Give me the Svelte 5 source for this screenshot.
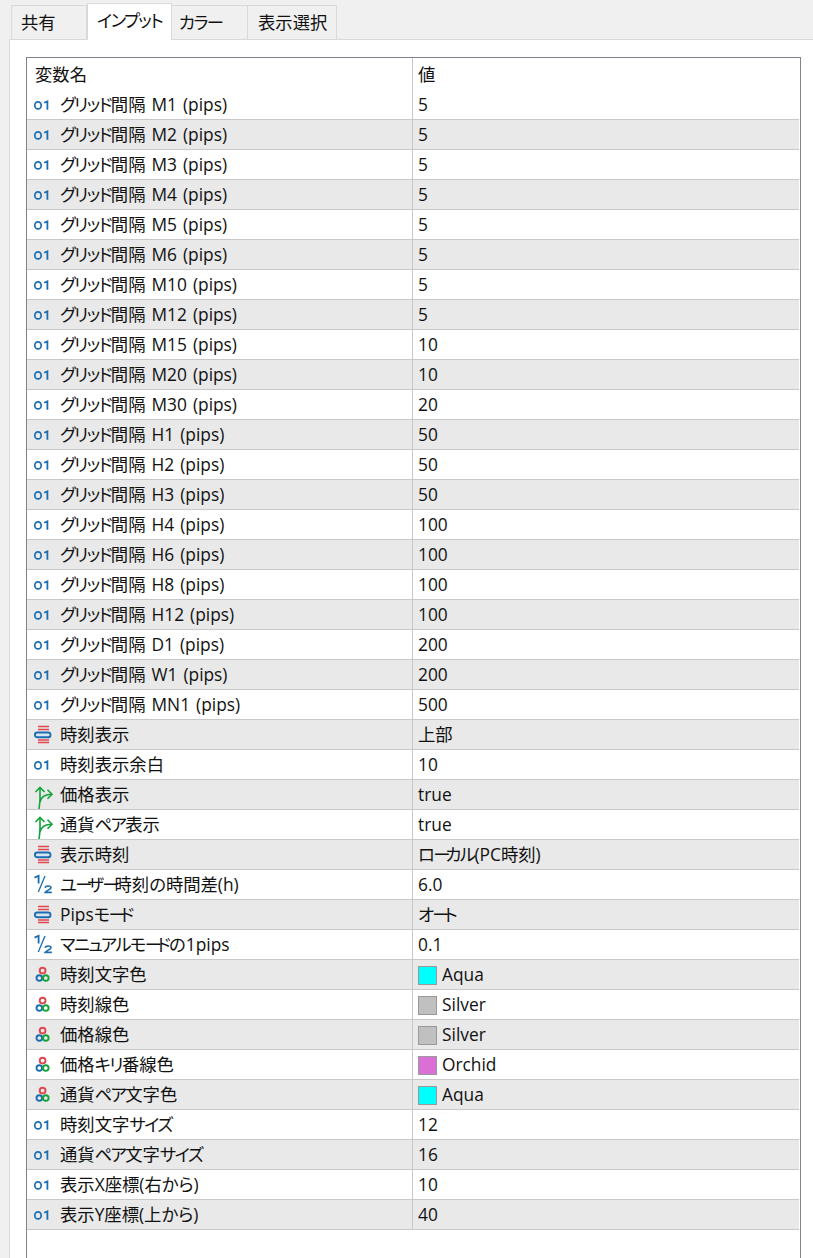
<script>
	const tabs = ['共有', 'インプット', 'カラー', '表示選択'];
	const active = 'インプット';

	const grid = [
		['M1', 5], ['M2', 5], ['M3', 5], ['M4', 5], ['M5', 5], ['M6', 5], ['M10', 5], ['M12', 5],
		['M15', 10], ['M20', 10], ['M30', 20], ['H1', 50], ['H2', 50], ['H3', 50], ['H4', 100],
		['H6', 100], ['H8', 100], ['H12', 100], ['D1', 200], ['W1', 200], ['MN1', 500]
	];

	const rows = [
		...grid.map(([tf, v]) => ({ icon: 'int', name: `グリッド間隔 ${tf} (pips)`, value: String(v) })),
		{ icon: 'enum', name: '時刻表示', value: '上部' },
		{ icon: 'int', name: '時刻表示余白', value: '10' },
		{ icon: 'bool', name: '価格表示', value: 'true' },
		{ icon: 'bool', name: '通貨ペア表示', value: 'true' },
		{ icon: 'enum', name: '表示時刻', value: 'ローカル(PC時刻)' },
		{ icon: 'float', name: 'ユーザー時刻の時間差(h)', value: '6.0' },
		{ icon: 'enum', name: 'Pipsモード', value: 'オート' },
		{ icon: 'float', name: 'マニュアルモードの1pips', value: '0.1' },
		{ icon: 'color', name: '時刻文字色', value: 'Aqua', swatch: '#00ffff' },
		{ icon: 'color', name: '時刻線色', value: 'Silver', swatch: '#c0c0c0' },
		{ icon: 'color', name: '価格線色', value: 'Silver', swatch: '#c0c0c0' },
		{ icon: 'color', name: '価格キリ番線色', value: 'Orchid', swatch: '#da70d6' },
		{ icon: 'color', name: '通貨ペア文字色', value: 'Aqua', swatch: '#00ffff' },
		{ icon: 'int', name: '時刻文字サイズ', value: '12' },
		{ icon: 'int', name: '通貨ペア文字サイズ', value: '16' },
		{ icon: 'int', name: '表示X座標(右から)', value: '10' },
		{ icon: 'int', name: '表示Y座標(上から)', value: '40' }
	];

	const runs = (text) => text.match(/ー|[ァ-ヶ]+|[^ーァ-ヶ]+/g);
	const runClass = (run) => (run === 'ー' ? 'bar' : /[ァ-ヶ]/.test(run) ? 'kana' : '');
</script>

{#snippet label(text)}
	<span>{#each runs(text) as run}<span class={runClass(run)}>{run}</span>{/each}</span>
{/snippet}

<div class="window">
	<div class="tabs">
		{#each tabs as tab}
			<div class="tab" class:active={tab === active}>{@render label(tab)}</div>
		{/each}
	</div>
	<div class="panel">
		<div class="table">
			<div class="row head">
				<div class="name">変数名</div>
				<div class="value">値</div>
			</div>
			{#each rows as row}
				<div class="row">
					<div class="name">
						<svg class="icon" width="20" height="20" viewBox="0 0 20 20" fill="none">
							{#if row.icon === 'int'}
								<ellipse cx="5" cy="10.4" rx="3.2" ry="3.5" stroke="#1a6db0" stroke-width="1.7" />
								<path d="M11.2 7.8 14.4 6.4V14.8" stroke="#1a6db0" stroke-width="1.8" />
							{:else if row.icon === 'enum'}
								<path d="M5 1.5H16M5 4.5H16M5 15H16M5 17.5H16" stroke="#e2454d" stroke-width="1.5" />
								<rect x="1.9" y="7.5" width="15.6" height="4.8" rx="2.4" fill="#d8e6f2" stroke="#1a6db0" stroke-width="1.9" />
							{:else if row.icon === 'bool'}
								<path d="M2.5 7 7 2.5 11.5 7M14.5 4.7 19 9.2 14.5 13.7" stroke="#12a43a" stroke-width="1.6" />
								<path d="M7 2.5V13C7 17 6.5 20 6 24M7 17C8 12 12 9.2 19 9.2" stroke="#12a43a" stroke-width="1.6" />
							{:else if row.icon === 'float'}
								<path d="M1.5 2.6 5.6 0.8V8.4" stroke="#1a6db0" stroke-width="1.8" />
								<path d="M12 1 5.3 17" stroke="#1a6db0" stroke-width="1.3" />
								<path d="M12.2 12.8C12.6 10.4 18 10.4 18 12.8C18 14.6 13.6 15 12.2 17.4H18.8" stroke="#1a6db0" stroke-width="1.6" />
							{:else}
								<circle cx="9.6" cy="5.6" r="2.9" stroke="#e2454d" stroke-width="1.9" />
								<circle cx="6.3" cy="13" r="2.8" stroke="#1a6db0" stroke-width="1.9" />
								<circle cx="12.8" cy="13" r="2.8" stroke="#12a43a" stroke-width="1.9" />
							{/if}
						</svg>
						{@render label(row.name)}
					</div>
					<div class="value">
						{#if row.swatch}
							<span class="swatch" style:background={row.swatch}></span>
						{/if}
						{@render label(row.value)}
					</div>
				</div>
			{/each}
		</div>
	</div>
</div>

<style>
	:global(html, body) {
		height: 100%;
		overflow: hidden;
	}

	:global(body) {
		background: #f0f0f0;
	}

	.window {
		height: 1258px;
		overflow: hidden;
		font-family: 'Open Sans', 'Noto Sans CJK JP', sans-serif;
		font-size: 17.33px;
		font-feature-settings: 'palt';
		word-spacing: 1.5px;
		color: #111;
	}

	.kana {
		letter-spacing: -1.6px;
	}

	.bar {
		letter-spacing: -5px;
	}

	.tabs {
		display: flex;
		align-items: flex-end;
		height: 39px;
		padding-left: 11px;
	}

	.tab {
		height: 34px;
		padding: 0 9px;
		box-sizing: border-box;
		display: flex;
		align-items: center;
		white-space: nowrap;
		border: 1px solid #d9d9d9;
		border-bottom: none;
		border-left-width: 0;
		line-height: 1;
	}

	.tab:first-child {
		border-left-width: 1px;
		width: 76px;
	}

	.tab:nth-child(3) {
		width: 76px;
		padding-left: 7px;
	}

	.tab:nth-child(4) {
		width: 89px;
		padding-left: 10px;
	}

	.tab.active {
		width: 85px;
		height: 37px;
		margin-bottom: -1px;
		padding-left: 9px;
		padding-bottom: 3px;
		background: #fff;
		border-left-width: 1px;
		position: relative;
	}

	.panel {
		margin-left: 9px;
		height: 1300px;
		box-sizing: border-box;
		background: #fff;
		border: 1px solid #d9d9d9;
		border-right: none;
		padding: 17px 12px 0 16px;
	}

	.table {
		height: 1300px;
		border: 1px solid #82828c;
		box-sizing: border-box;
		padding-right: 1px;
	}

	.row {
		display: grid;
		grid-template-columns: 386px 1fr;
		height: 30px;
		box-sizing: border-box;
		border-bottom: 1px solid #c8c8c8;
	}

	.row:nth-child(odd) {
		background: #e9e9e9;
	}

	.row.head {
		height: 32px;
		background: #fff;
		border-bottom: none;
	}

	.name,
	.value {
		display: flex;
		align-items: center;
		white-space: nowrap;
		line-height: 1;
		padding-top: 1px;
		box-sizing: border-box;
	}

	.name {
		gap: 7px;
		padding-left: 6px;
		border-right: 1px solid #c8c8c8;
	}

	.head .name {
		padding-left: 8px;
	}

	.value {
		gap: 5px;
		padding-left: 5px;
	}

	.icon {
		flex: none;
		overflow: visible;
	}

	.swatch {
		flex: none;
		width: 19px;
		height: 19px;
		box-sizing: border-box;
		border: 1px solid #999;
	}
</style>
